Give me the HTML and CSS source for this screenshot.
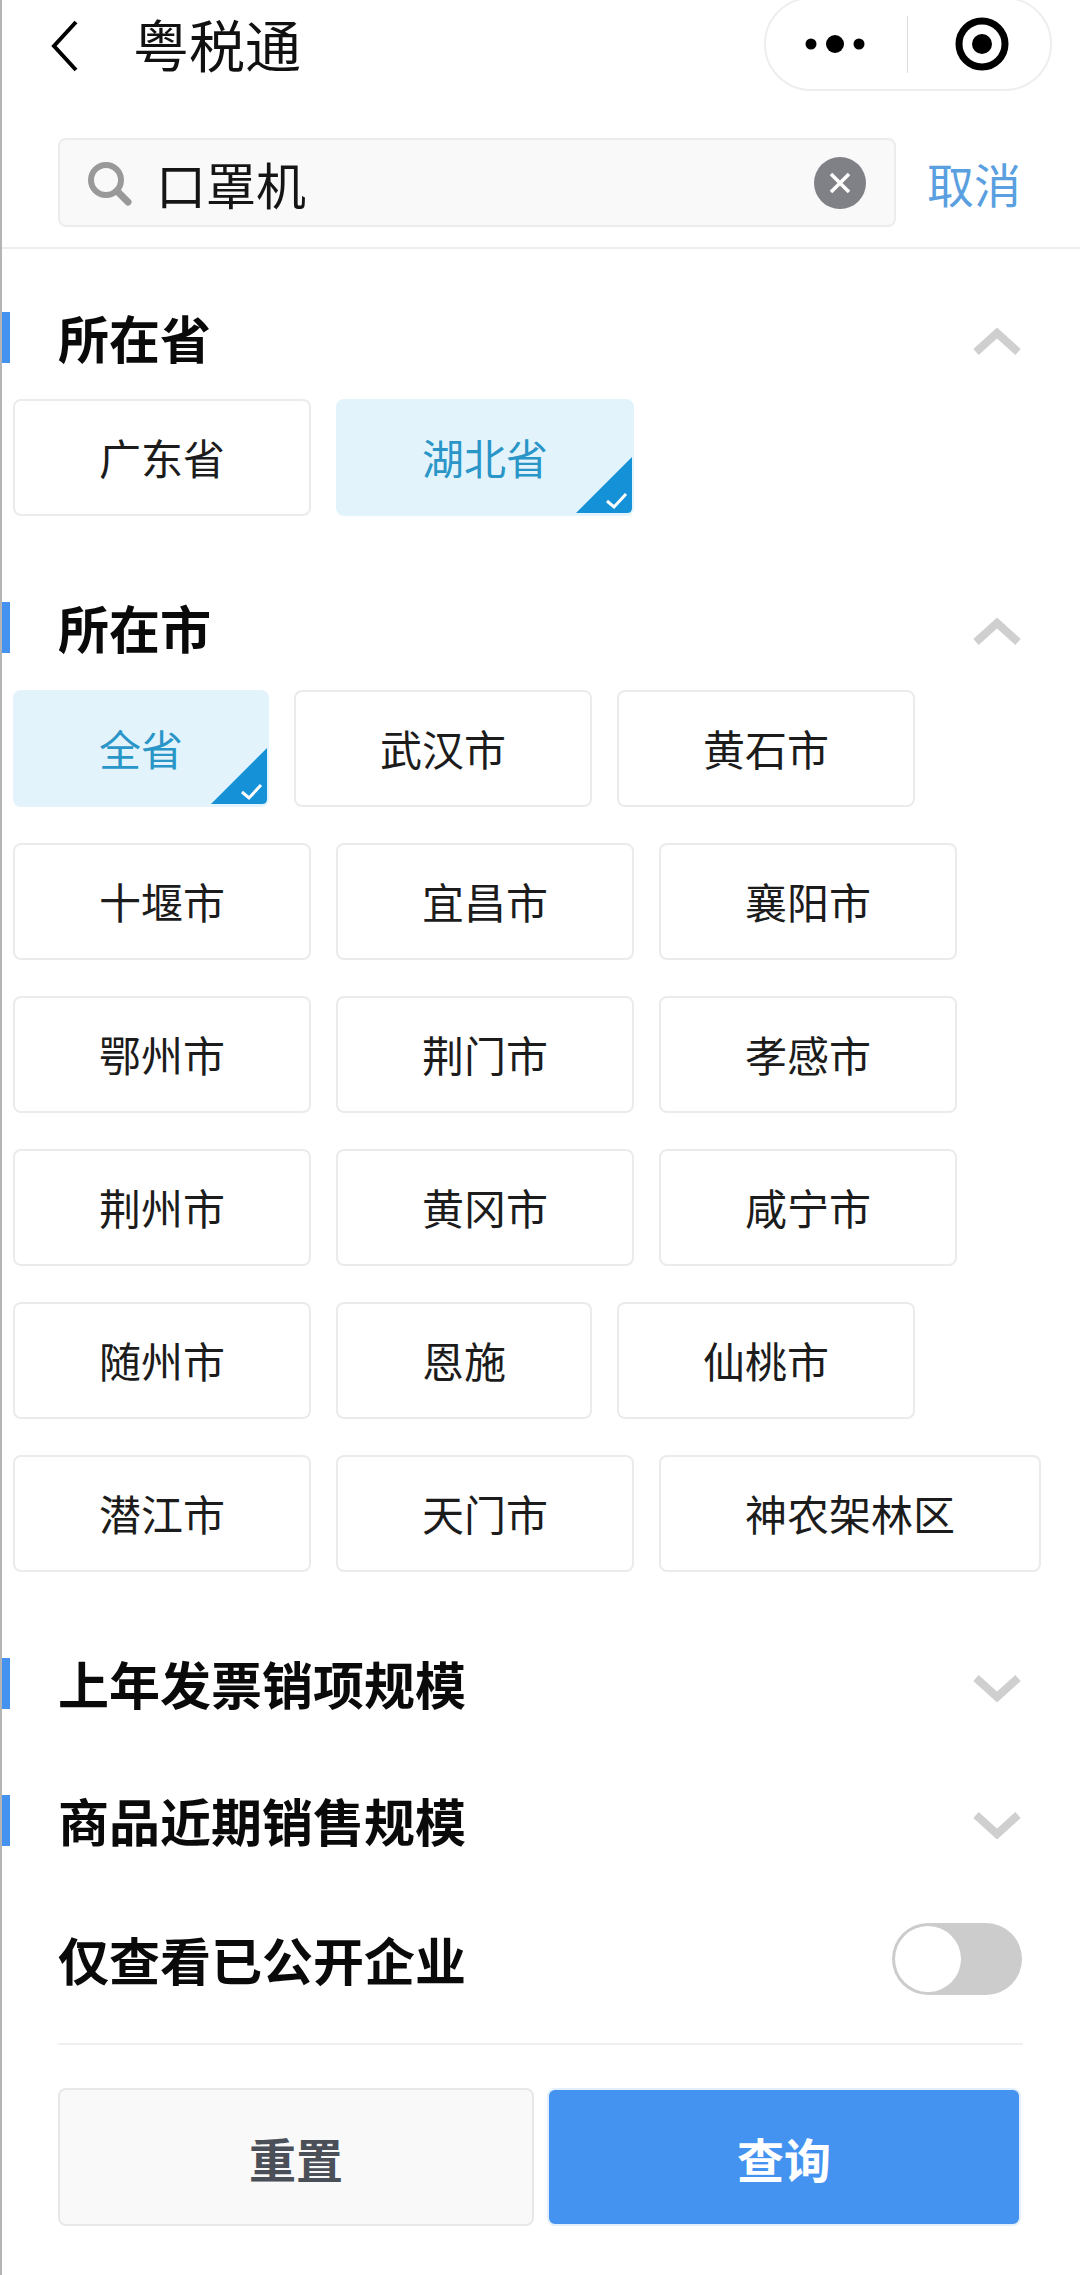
FILE: index.html
```html
<!DOCTYPE html>
<html lang="zh-CN">
  <head>
    <meta charset="UTF-8" />
    <title>粤税通</title>
    <link rel="stylesheet" href="styles.css">
  </head>
  <body>
    <header class="nav">
      <svg class="back" viewBox="0 0 27 52" width="27" height="52"><polyline points="25,2 3,26 25,50" /></svg>
      <h1 class="nav-title">粤税通</h1>
      <div class="capsule">
        <svg class="capsule-more" viewBox="0 0 60 20" width="60" height="20"><circle cx="6" cy="10" r="5.5" /><circle cx="30" cy="10" r="9" /><circle cx="54" cy="10" r="5.5" /></svg>
        <span class="capsule-line"></span>
        <svg class="capsule-target" viewBox="0 0 54 54" width="54" height="54"><circle class="ring" cx="27" cy="27" r="23" /><circle cx="27" cy="27" r="10" /></svg>
      </div>
    </header>

    <div class="search-row">
      <div class="search-box">
        <svg class="search-icon" viewBox="0 0 46 46" width="46" height="46"><circle cx="20" cy="20" r="15" /><line x1="31" y1="31" x2="42" y2="42" /></svg>
        <span class="search-text">口罩机</span>
        <svg class="search-clear" viewBox="0 0 52 52" width="52" height="52"><circle cx="26" cy="26" r="26" /><path d="M17 17 L35 35 M35 17 L17 35" /></svg>
      </div>
      <a class="cancel" href="#">取消</a>
    </div>

    <section class="section first">
      <div class="section-head">
        <span class="bar"></span>
        <h2>所在省</h2>
        <svg class="arrow" viewBox="0 0 50 30" width="50" height="30"><polyline points="4,25 25,6 46,25" /></svg>
      </div>
      <div class="chips">
        <div class="chip">广东省</div>
        <div class="chip selected">湖北省
          <svg class="corner" viewBox="0 0 56 56" width="56" height="56"><path class="tri" d="M56 0 V51 Q56 56 51 56 H0 Z" /><path class="tick" d="M31 44 L38 50 L50 37" /></svg>
        </div>
      </div>
    </section>

    <section class="section">
      <div class="section-head">
        <span class="bar"></span>
        <h2>所在市</h2>
        <svg class="arrow" viewBox="0 0 50 30" width="50" height="30"><polyline points="4,25 25,6 46,25" /></svg>
      </div>
      <div class="chips city-chips">
        <div class="chip selected">全省
          <svg class="corner" viewBox="0 0 56 56" width="56" height="56"><path class="tri" d="M56 0 V51 Q56 56 51 56 H0 Z" /><path class="tick" d="M31 44 L38 50 L50 37" /></svg>
        </div>
        <div class="chip">武汉市</div>
        <div class="chip">黄石市</div>
        <div class="chip">十堰市</div>
        <div class="chip">宜昌市</div>
        <div class="chip">襄阳市</div>
        <div class="chip">鄂州市</div>
        <div class="chip">荆门市</div>
        <div class="chip">孝感市</div>
        <div class="chip">荆州市</div>
        <div class="chip">黄冈市</div>
        <div class="chip">咸宁市</div>
        <div class="chip">随州市</div>
        <div class="chip">恩施</div>
        <div class="chip">仙桃市</div>
        <div class="chip">潜江市</div>
        <div class="chip">天门市</div>
        <div class="chip">神农架林区</div>
      </div>
    </section>

    <section class="section">
      <div class="section-head">
        <span class="bar"></span>
        <h2>上年发票销项规模</h2>
        <svg class="arrow" viewBox="0 0 50 30" width="50" height="30"><polyline points="4,5 25,24 46,5" /></svg>
      </div>
    </section>

    <section class="section">
      <div class="section-head">
        <span class="bar"></span>
        <h2>商品近期销售规模</h2>
        <svg class="arrow" viewBox="0 0 50 30" width="50" height="30"><polyline points="4,5 25,24 46,5" /></svg>
      </div>
    </section>

    <div class="switch-row">
      <h2>仅查看已公开企业</h2>
      <div class="switch"><span class="knob"></span></div>
    </div>

    <div class="actions">
      <button class="btn reset">重置</button>
      <button class="btn query">查询</button>
    </div>
  </body>
</html>
```

FILE: styles.css
```css
/* Page */
html {
  background: #ffffff;
}
body {
  margin: 0;
  height: 2275px;
  overflow: hidden;
  box-sizing: border-box;
  border-left: 2px solid #b4b4b4;
  background: #ffffff;
  color: #111111;
  font-family: "Noto Sans CJK SC", "Noto Sans", sans-serif;
}
h1,
h2 {
  margin: 0;
}

/* Top navigation */
.nav {
  display: flex;
  align-items: center;
  height: 92px;
  padding-left: 49px;
  padding-right: 28px;
}
.back {
  flex: none;
}
.back polyline {
  fill: none;
  stroke: #000000;
  stroke-width: 4;
}
.nav-title {
  margin-left: 55px;
  margin-bottom: 6px;
  font-size: 56px;
  font-weight: 400;
  line-height: 80px;
  color: #111111;
}
.capsule {
  display: flex;
  align-items: center;
  margin-left: auto;
  box-sizing: border-box;
  width: 288px;
  height: 94px;
  margin-top: -4px;
  border: 2px solid #eeeeee;
  border-radius: 47px;
  padding-left: 39px;
}
.capsule-more circle {
  fill: #000000;
}
.capsule-line {
  width: 1px;
  height: 57px;
  margin-left: 42px;
  background: #dddddd;
}
.capsule-target {
  margin-left: 47px;
}
.capsule-target circle {
  fill: #000000;
}
.capsule-target .ring {
  fill: none;
  stroke: #000000;
  stroke-width: 7;
}

/* Search */
.search-row {
  display: flex;
  align-items: center;
  margin-top: 46px;
  padding: 0 0 20px 56px;
  border-bottom: 2px solid #eeeeee;
}
.search-box {
  display: flex;
  align-items: center;
  box-sizing: border-box;
  width: 838px;
  height: 89px;
  padding: 0 28px 0 26px;
  background: #f9f9fa;
  border: 2px solid #ececec;
  border-radius: 8px;
}
.search-icon circle {
  fill: none;
  stroke: #999999;
  stroke-width: 6;
}
.search-icon line {
  stroke: #999999;
  stroke-width: 7;
  stroke-linecap: round;
}
.search-text {
  margin-left: 24px;
  font-size: 50px;
  line-height: 60px;
  color: #151515;
}
.search-clear {
  margin-left: auto;
}
.search-clear circle {
  fill: #808186;
}
.search-clear path {
  fill: none;
  stroke: #ffffff;
  stroke-width: 3.5;
}
.cancel {
  margin-left: 31px;
  font-size: 47px;
  line-height: 60px;
  color: #5a9fe0;
  text-decoration: none;
}

/* Filter sections */
.section {
  margin-bottom: 86px;
}
.section.first {
  margin-top: 63px;
}
.section-head {
  display: flex;
  align-items: center;
  height: 51px;
  padding-right: 58px;
}
.bar {
  flex: none;
  width: 8px;
  height: 51px;
  background: #4493f0;
}
h2 {
  font-size: 51px;
  font-weight: 700;
  line-height: 51px;
  color: #0a0a0a;
}
.section-head h2 {
  margin-left: 48px;
}
.arrow {
  margin-left: auto;
  margin-top: 8px;
}
.arrow polyline {
  fill: none;
  stroke: #cfcfcf;
  stroke-width: 8;
}
.chips {
  display: flex;
  flex-wrap: wrap;
  gap: 36px 25px;
  margin-top: 36px;
  padding-left: 11px;
}
.city-chips {
  margin-top: 37px;
  margin-bottom: 1px;
}
.chip {
  position: relative;
  box-sizing: border-box;
  height: 117px;
  padding: 0 84px;
  border: 2px solid #ebebeb;
  border-radius: 8px;
  font-size: 42px;
  line-height: 111px;
  color: #1c1c1c;
}
.chip.selected {
  background: #e3f3fc;
  border-color: #e3f3fc;
  color: #2a96c8;
}
.corner {
  position: absolute;
  right: 0;
  bottom: 1px;
}
.corner .tri {
  fill: #1591d8;
}
.corner .tick {
  fill: none;
  stroke: #ffffff;
  stroke-width: 3;
}

/* Switch row */
.switch-row {
  display: flex;
  align-items: center;
  justify-content: space-between;
  margin-top: -9px;
  margin-left: 56px;
  margin-right: 57px;
  padding-bottom: 48px;
  border-bottom: 2px solid #f0f0f0;
}
.switch {
  display: flex;
  align-items: center;
  box-sizing: border-box;
  width: 130px;
  height: 72px;
  margin-right: 1px;
  padding-left: 3px;
  border-radius: 36px;
  background: #cccccc;
}
.knob {
  width: 66px;
  height: 66px;
  border-radius: 50%;
  background: #ffffff;
}

/* Bottom buttons */
.actions {
  display: flex;
  gap: 13px;
  margin-top: 43px;
  padding-left: 56px;
}
.btn {
  box-sizing: border-box;
  height: 138px;
  border-radius: 8px;
  font-family: inherit;
  font-size: 47px;
  font-weight: 700;
}
.reset {
  width: 476px;
  background: #f9f9fa;
  border: 2px solid #e8e8e8;
  color: #4b4f58;
}
.query {
  width: 474px;
  background: #4493f0;
  border: 2px solid #e3f0fc;
  color: #ffffff;
}
```
